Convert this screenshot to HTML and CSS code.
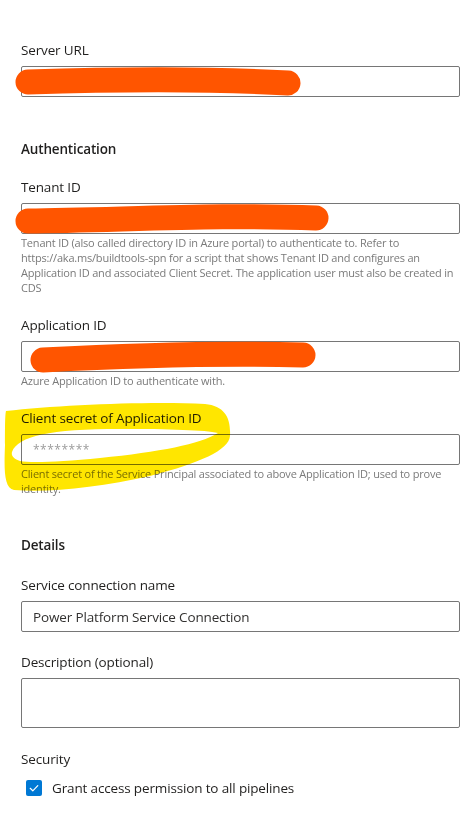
FILE: index.html
```html
<!DOCTYPE html>
<html>
<head>
<meta charset="utf-8">
<link rel="stylesheet" href="styles.css">
</head>
<body>
<div class="form">
  <div class="field first">
    <div class="label">Server URL</div>
    <div class="input"></div>
  </div>

  <div class="section">Authentication</div>

  <div class="field">
    <div class="label">Tenant ID</div>
    <div class="input"></div>
    <div class="help">Tenant ID (also called directory ID in Azure portal) to authenticate to. Refer to https://aka.ms/buildtools-spn for a script that shows Tenant ID and configures an Application ID and associated Client Secret. The application user must also be created in CDS</div>
  </div>

  <div class="field">
    <div class="label">Application ID</div>
    <div class="input"></div>
    <div class="help">Azure Application ID to authenticate with.</div>
  </div>

  <div class="field">
    <div class="label">Client secret of Application ID</div>
    <div class="input"><span class="placeholder">********</span></div>
    <div class="help">Client secret of the Service Principal associated to above Application ID; used to prove identity.</div>
  </div>

  <div class="section details">Details</div>

  <div class="field">
    <div class="label">Service connection name</div>
    <div class="input"><span class="value">Power Platform Service Connection</span></div>
  </div>

  <div class="field desc">
    <div class="label">Description (optional)</div>
    <div class="input textarea"></div>
  </div>

  <div class="field">
    <div class="label">Security</div>
    <div class="check-row">
      <span class="checkbox">
        <svg width="16" height="16" viewBox="0 0 16 16"><path d="M4.2 8.3 L6.8 10.8 L11.8 5.6" fill="none" stroke="#fff" stroke-width="1.2" stroke-linecap="round" stroke-linejoin="round"/></svg>
      </span>
      <span class="check-label">Grant access permission to all pipelines</span>
    </div>
  </div>
</div>

<svg class="scribbles" width="472" height="828" viewBox="0 0 472 828">
  <path d="M28 82 C 90 80, 200 78, 288 83" fill="none" stroke="#ff5500" stroke-width="25" stroke-linecap="round"/>
  <path d="M28 221 C 120 220, 230 214, 316 218" fill="none" stroke="#ff5500" stroke-width="25" stroke-linecap="round"/>
  <path d="M43 360 C 120 356, 220 353, 303 355" fill="none" stroke="#ff5500" stroke-width="25" stroke-linecap="round"/>
  <path class="hl" fill-rule="evenodd" d="M6 411 C 60 405, 150 401, 205 404 C 225 406, 231 418, 230 436 C 229 450, 200 463, 150 476 C 100 487, 50 493, 14 490 C 4 488, 4 470, 5 445 C 5 430, 5 414, 6 411 Z M12 452 C 18 436, 50 429, 120 429 C 170 429, 205 430, 218 433 C 200 444, 160 452, 100 458 C 60 462, 30 463, 20 461 C 14 459, 11 456, 12 452 Z" fill="#ffe600"/>
</svg>
</body>
</html>
```

FILE: styles.css
```css
html, body {
  margin: 0;
  padding: 0;
  background: #ffffff;
}

body {
  width: 472px;
  height: 828px;
  overflow: hidden;
  position: relative;
  font-family: "Open Sans", "Noto Sans", sans-serif;
  color: #323130;
}

.form {
  padding: 40px 12px 0 21px;
  display: flex;
  flex-direction: column;
}

.field {
  display: flex;
  flex-direction: column;
  margin-bottom: 20px;
}

.desc {
  margin-bottom: 21px;
}

.label {
  font-size: 13.5px;
  letter-spacing: -0.15px;
  line-height: 20px;
  height: 20px;
  margin-bottom: 6px;
  color: #201f1e;
}

.section {
  font-size: 13.5px;
  letter-spacing: -0.15px;
  font-weight: 600;
  line-height: 20px;
  color: #201f1e;
  margin-top: 22px;
  margin-bottom: 18px;
}

.details {
  margin-top: 19px;
  margin-bottom: 20px;
}

.input {
  box-sizing: border-box;
  width: 439px;
  height: 31px;
  border: 1px solid #767676;
  border-radius: 2px;
  display: flex;
  align-items: center;
  padding-left: 11px;
  font-size: 13.5px;
  letter-spacing: -0.15px;
}

.textarea {
  height: 50px;
}

.placeholder {
  color: #9b9b9b;
  font-size: 12px;
  letter-spacing: 0.5px;
}

.value {
  color: #323130;
}

.help {
  font-size: 11px;
  letter-spacing: -0.2px;
  line-height: 15px;
  color: #7a7a7a;
  margin-top: 1px;
}

.check-row {
  display: flex;
  align-items: center;
  gap: 10px;
  padding-left: 5px;
  margin-top: 3px;
}

.checkbox {
  width: 16px;
  height: 16px;
  border-radius: 2px;
  background: #0078d4;
  display: flex;
}

.check-label {
  font-size: 13.5px;
  letter-spacing: -0.15px;
  line-height: 20px;
  color: #201f1e;
}

.scribbles {
  position: absolute;
  left: 0;
  top: 0;
  pointer-events: none;
}

.hl {
  mix-blend-mode: multiply;
}
```
